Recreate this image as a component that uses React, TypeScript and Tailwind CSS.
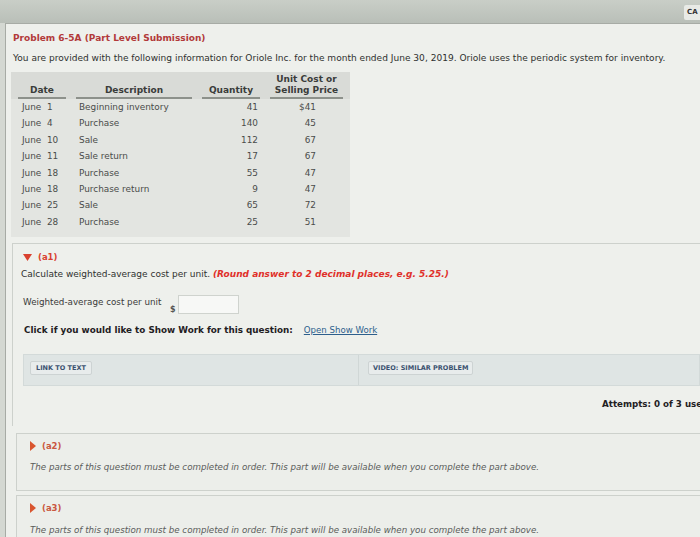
import React from "react";

const rows = [
  { date: "June  1", desc: "Beginning inventory", qty: "41", price: "$41" },
  { date: "June  4", desc: "Purchase", qty: "140", price: "45" },
  { date: "June  10", desc: "Sale", qty: "112", price: "67" },
  { date: "June  11", desc: "Sale return", qty: "17", price: "67" },
  { date: "June  18", desc: "Purchase", qty: "55", price: "47" },
  { date: "June  18", desc: "Purchase return", qty: "9", price: "47" },
  { date: "June  25", desc: "Sale", qty: "65", price: "72" },
  { date: "June  28", desc: "Purchase", qty: "25", price: "51" },
];

const LOCKED_TEXT =
  "The parts of this question must be completed in order. This part will be available when you complete the part above.";

const Triangle = ({ open }: { open?: boolean }) =>
  open ? (
    <svg width="9" height="7" viewBox="0 0 9 7" className="shrink-0">
      <polygon points="0,0 9,0 4.5,7" fill="#d9412f" />
    </svg>
  ) : (
    <svg width="6" height="10" viewBox="0 0 6 10" className="shrink-0">
      <polygon points="0,0 6,5 0,10" fill="#d9552f" />
    </svg>
  );

const HeaderCell = ({ children }: { children: React.ReactNode }) => (
  <div className="flex items-end justify-center border-b-2 border-[#8d918b] pb-[1px] text-center font-bold leading-[11px] text-[#3a3c3a]">
    {children}
  </div>
);

const LockedPart = ({ label, gap, pb }: { label: string; gap: string; pb: string }) => (
  <div className={`ml-[3px] border-l border-t border-b border-[#cdd1cc] bg-[#eceeea] pl-[13px] ${pb}`}>
    <div className="flex items-center gap-[6px] pt-[6px] leading-[12px]">
      <Triangle />
      <span className="text-[8.5px] font-bold text-[#c9573f]">{label}</span>
    </div>
    <div className={`${gap} whitespace-nowrap text-[8.7px] italic leading-[12px] text-[#5a5c5a]`}>
      {LOCKED_TEXT}
    </div>
  </div>
);

export default function App() {
  return (
    <div className="h-[537px] w-[700px] overflow-hidden bg-[#d4d8d2] font-['DejaVu_Sans',sans-serif] text-[#333]">
      <div className="flex h-[23px] justify-end bg-gradient-to-b from-[#c9cec7] to-[#b9bfb8] pt-[5px]">
        <div className="h-[15px] w-[16px] rounded-l-[2px] bg-[#e8eae6] pl-[3px] text-[7px] font-bold leading-[15px] text-[#333]">
          CA
        </div>
      </div>

      <div className="ml-[5px] h-full border-l border-t border-[#a7aba5] bg-[#eef0ec] pl-[7px] pt-[8px]">
        <div className="text-[9px] font-bold leading-[12px] text-[#b23a3a]">
          Problem 6-5A (Part Level Submission)
        </div>
        <div className="mt-[8px] whitespace-nowrap text-[9.05px] leading-[12px] text-[#2f302f]">
          You are provided with the following information for Oriole Inc. for the month ended June 30, 2019. Oriole uses the periodic system for inventory.
        </div>

        <div className="ml-[-2px] mt-[8px] h-[165px] w-[339px] bg-[#e3e5e1] pl-[7px] text-[8.9px]">
          <div className="-ml-[7px] grid grid-cols-[48px_116px_58px_73px] gap-x-[10px] bg-[#d9dbd7] pl-[7px] pt-[2px] text-[9px]">
            <HeaderCell>Date</HeaderCell>
            <HeaderCell>Description</HeaderCell>
            <HeaderCell>Quantity</HeaderCell>
            <HeaderCell>
              Unit Cost or
              <br />
              Selling Price
            </HeaderCell>
          </div>
          <div className="grid grid-cols-[48px_116px_58px_73px] gap-x-[10px] text-[#4a4c4a]">
            {rows.map((r, i) => (
              <React.Fragment key={i}>
                <div className="whitespace-pre pl-[4px] leading-[16.4px]">{r.date}</div>
                <div className="pl-[3px] leading-[16.4px]">{r.desc}</div>
                <div className="pr-[2px] text-right leading-[16.4px]">{r.qty}</div>
                <div className="pr-[27px] text-right leading-[16.4px]">{r.price}</div>
              </React.Fragment>
            ))}
          </div>
        </div>

        <div className="ml-[-1px] mt-[6px] h-[183px] border-l border-t border-[#cdd1cc] bg-[#eef0ec] pl-[8px] pt-[7px]">
          <div className="ml-[2px] flex items-center gap-[6px] leading-[12px]">
            <Triangle open />
            <span className="text-[8.5px] font-bold text-[#d9412f]">(a1)</span>
          </div>
          <div className="mt-[5px] whitespace-nowrap text-[9px] leading-[12px] text-[#2f302f]">
            Calculate weighted-average cost per unit.{" "}
            <span className="font-bold italic text-[#e0302a]">
              (Round answer to 2 decimal places, e.g. 5.25.)
            </span>
          </div>

          <div className="ml-[2px] mt-[15px] flex items-start text-[8.75px] text-[#3a3b3a]">
            <span className="mt-[1px] w-[147px] leading-[12px]">Weighted-average cost per unit</span>
            <span className="mt-[10px] w-[8px] text-[8px] font-bold leading-[10px] text-[#555]">$</span>
            <div className="h-[19px] w-[61px] border border-[#cfd3ce] bg-[#f7f8f6]" />
          </div>

          <div className="ml-[3px] mt-[9px] flex items-center whitespace-nowrap leading-[12px]">
            <span className="text-[8.8px] font-bold text-[#1f201f]">
              Click if you would like to Show Work for this question:
            </span>
            <span className="ml-[11px] text-[8.6px] text-[#2d5f8c] underline">Open Show Work</span>
          </div>

          <div className="ml-[2px] mt-[18px] flex h-[32px] border border-[#d3dad9] bg-[#dfe5e4]">
            <div className="flex w-[335px] items-start border-r border-[#d0d7d6] pl-[6px] pt-[6px]">
              <div className="h-[14px] rounded-[2px] border border-[#cdd3d3] bg-[#e8ecec] px-[5px] text-[6.5px] font-bold leading-[12px] text-[#3b5270]">
                LINK TO TEXT
              </div>
            </div>
            <div className="flex items-start pl-[9px] pt-[6px]">
              <div className="h-[14px] whitespace-nowrap rounded-[2px] border border-[#cdd3d3] bg-[#e8ecec] px-[4px] text-[6.5px] font-bold leading-[12px] text-[#3b5270]">
                VIDEO: SIMILAR PROBLEM
              </div>
            </div>
          </div>

          <div className="ml-[581px] mt-[12px] whitespace-nowrap text-[8.7px] font-bold leading-[12px] text-[#1f201f]">
            Attempts: 0 of 3 used
          </div>
        </div>

        <div className="mt-[7px]">
          <LockedPart label="(a2)" gap="mt-[9px]" pb="pb-[17px]" />
          <div className="h-[4px]" />
          <LockedPart label="(a3)" gap="mt-[10px]" pb="pb-[17px]" />
        </div>
      </div>
    </div>
  );
}
